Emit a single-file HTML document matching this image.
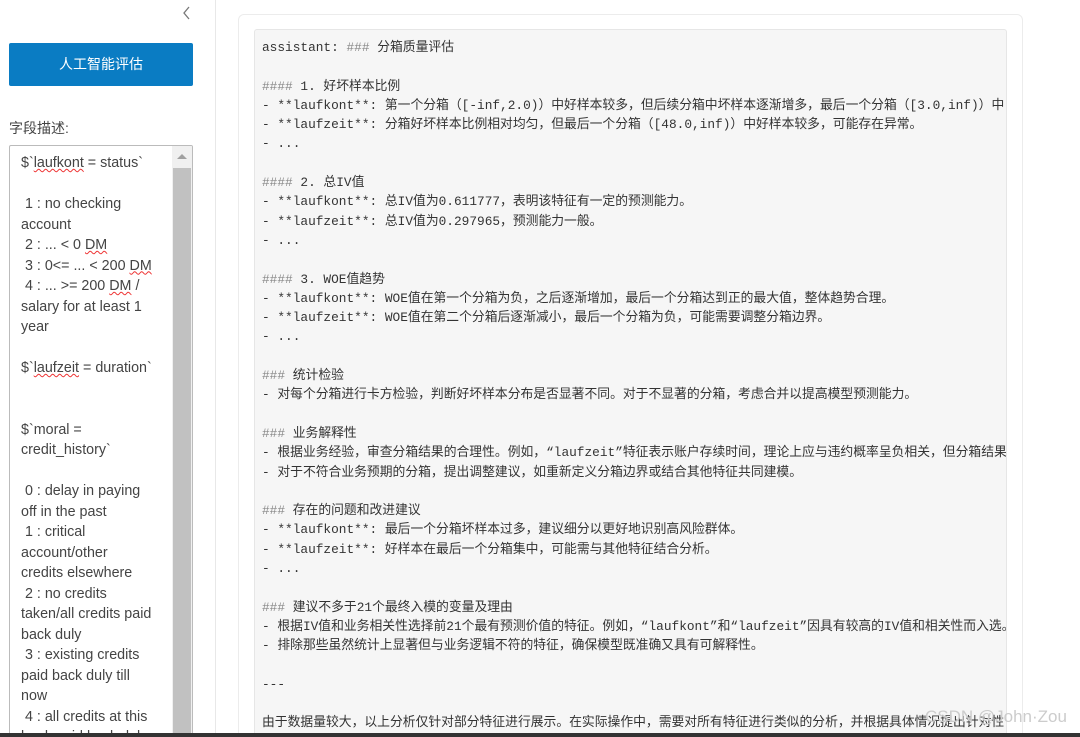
<!DOCTYPE html>
<html><head><meta charset="utf-8"><style>
*{margin:0;padding:0;box-sizing:border-box}
html,body{width:1080px;height:737px;overflow:hidden}
body{background:#fff;position:relative;font-family:"Liberation Sans","Noto Sans CJK SC",sans-serif}
.left{position:absolute;left:0;top:0;width:216px;height:737px;border-right:1px solid #e8e8e8}
.chev{position:absolute;left:181px;top:5px;width:12px;height:16px}
.btn{position:absolute;left:9px;top:43px;width:184px;height:43px;background:#0a7cc3;border-radius:2px;color:#fff;font-size:14px;text-align:center;line-height:43px}
.lbl{position:absolute;left:9px;top:118px;font-size:14px;color:#444}
.ta{position:absolute;left:9px;top:145px;width:184px;height:600px;border:1px solid #bbb;border-radius:2px;overflow:hidden}
.ta .txt{position:absolute;left:11px;top:7px;font-size:14.3px;line-height:20.5px;color:#444;white-space:pre}
.u{text-decoration:underline wavy #e33;text-decoration-thickness:1px}
.sb{position:absolute;left:162px;top:0;width:20px;height:600px;background:#f0f0f0}
.sb .th{position:absolute;left:1px;top:22px;width:18px;height:580px;background:#c1c1c1}
.sb .ar{position:absolute;left:5px;top:8px;width:0;height:0;border-left:5px solid transparent;border-right:5px solid transparent;border-bottom:5px solid #a0a0a0}
.card{position:absolute;left:238px;top:14px;width:785px;height:740px;border:1px solid #ececec;border-radius:6px}
.pre{position:absolute;left:254px;top:29px;width:753px;height:720px;background:#f6f6f6;border:1px solid #e6e6e6;border-radius:3px;overflow:hidden}
.pre pre{position:absolute;left:7px;top:8px;font-family:"Liberation Mono","Noto Sans CJK SC",monospace;font-size:12.8px;line-height:19.3px;color:#333;white-space:pre}
.g{color:#888}
.bar{position:absolute;left:0;top:733px;width:1080px;height:4px;background:#333}
.wm{position:absolute;left:925px;top:707px;font-size:17px;color:#ccc}
</style></head><body>
<div class="left">
<svg class="chev" viewBox="0 0 12 16"><path d="M8 2L3 8l5 6" fill="none" stroke="#777" stroke-width="1.3"/></svg>
<div class="btn">人工智能评估</div>
<div class="lbl">字段描述:</div>
<div class="ta"><div class="txt">$`<span class="u">laufkont</span> = status`

 1 : no checking
account
 2 : ... &lt; 0 <span class="u">DM</span>
 3 : 0&lt;= ... &lt; 200 <span class="u">DM</span>
 4 : ... &gt;= 200 <span class="u">DM</span> /
salary for at least 1
year

$`<span class="u">laufzeit</span> = duration`


$`moral =
credit_history`

 0 : delay in paying
off in the past
 1 : critical
account/other
credits elsewhere
 2 : no credits
taken/all credits paid
back duly
 3 : existing credits
paid back duly till
now
 4 : all credits at this
bank paid back duly</div>
<div class="sb"><div class="ar"></div><div class="th"></div></div></div>
</div>
<div class="card"></div>
<div class="pre"><pre>assistant: <span class="g">###</span> 分箱质量评估

<span class="g">####</span> 1. 好坏样本比例
- **laufkont**: 第一个分箱（[-inf,2.0)）中好样本较多，但后续分箱中坏样本逐渐增多，最后一个分箱（[3.0,inf)）中
- **laufzeit**: 分箱好坏样本比例相对均匀，但最后一个分箱（[48.0,inf)）中好样本较多，可能存在异常。
- ...

<span class="g">####</span> 2. 总IV值
- **laufkont**: 总IV值为0.611777，表明该特征有一定的预测能力。
- **laufzeit**: 总IV值为0.297965，预测能力一般。
- ...

<span class="g">####</span> 3. WOE值趋势
- **laufkont**: WOE值在第一个分箱为负，之后逐渐增加，最后一个分箱达到正的最大值，整体趋势合理。
- **laufzeit**: WOE值在第二个分箱后逐渐减小，最后一个分箱为负，可能需要调整分箱边界。
- ...

<span class="g">###</span> 统计检验
- 对每个分箱进行卡方检验，判断好坏样本分布是否显著不同。对于不显著的分箱，考虑合并以提高模型预测能力。

<span class="g">###</span> 业务解释性
- 根据业务经验，审查分箱结果的合理性。例如，“laufzeit”特征表示账户存续时间，理论上应与违约概率呈负相关，但分箱结果
- 对于不符合业务预期的分箱，提出调整建议，如重新定义分箱边界或结合其他特征共同建模。

<span class="g">###</span> 存在的问题和改进建议
- **laufkont**: 最后一个分箱坏样本过多，建议细分以更好地识别高风险群体。
- **laufzeit**: 好样本在最后一个分箱集中，可能需与其他特征结合分析。
- ...

<span class="g">###</span> 建议不多于21个最终入模的变量及理由
- 根据IV值和业务相关性选择前21个最有预测价值的特征。例如，“laufkont”和“laufzeit”因具有较高的IV值和相关性而入选。
- 排除那些虽然统计上显著但与业务逻辑不符的特征，确保模型既准确又具有可解释性。

---

由于数据量较大，以上分析仅针对部分特征进行展示。在实际操作中，需要对所有特征进行类似的分析，并根据具体情况提出针对性</pre></div>
<div class="wm">CSDN @John·Zou</div>
<div class="bar"></div>
</body></html>
